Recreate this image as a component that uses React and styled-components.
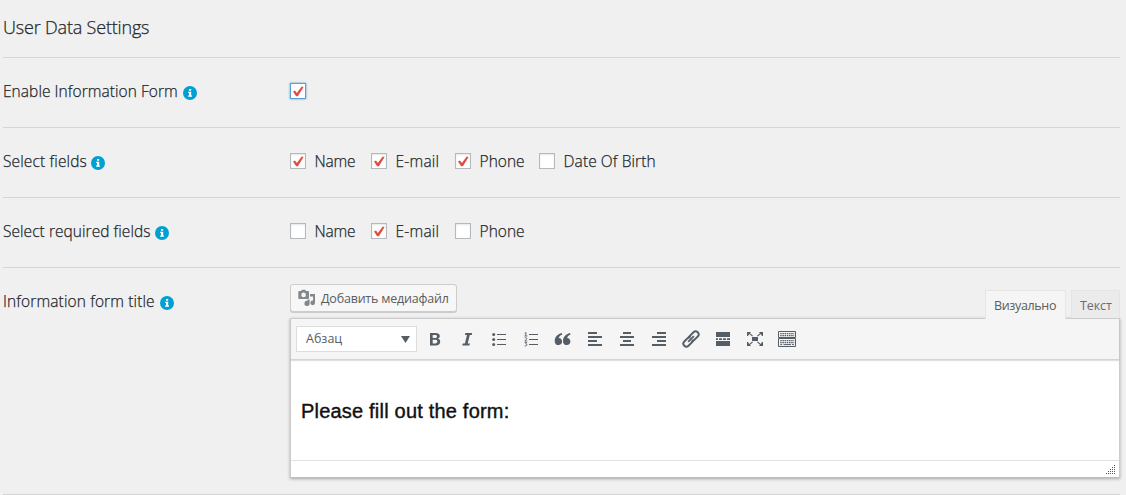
import React from 'react';
import styled, { createGlobalStyle, css } from 'styled-components';

const GlobalStyle = createGlobalStyle`
  * { box-sizing: border-box; }
  body {
    margin: 0;
    background: #f0f0f0;
    color: #23282d;
    font-family: "Open Sans", "Noto Sans", sans-serif;
    font-weight: 300;
    overflow: hidden;
  }
`;

const Page = styled.main`
  width: 1117px;
  margin-left: 3px;
`;

const Heading = styled.h2`
  margin: 0;
  height: 58px;
  padding-top: 15px;
  border-bottom: 1px solid #d5d5d5;
  font-size: 18px;
  font-weight: 300;
  line-height: 24px;
  letter-spacing: ${(p) => p.$spacing}px;
  white-space: nowrap;
  -webkit-text-stroke: 0.25px #23282d;
`;

const Row = styled.section`
  display: flex;
  height: ${(p) => p.$height || 70}px;
  border-bottom: 1px solid #d5d5d5;
`;

const Label = styled.div`
  display: flex;
  width: 287px;
  flex: none;
  padding-top: 21px;
  font-size: 15.5px;
  line-height: 24px;
  white-space: nowrap;
  -webkit-text-stroke: 0.25px #23282d;
`;

const LabelText = styled.span`
  width: ${(p) => p.$width}px;
  letter-spacing: ${(p) => p.$spacing}px;
`;

const InfoBadge = styled.svg`
  width: 14px;
  height: 14px;
  margin: 6.5px 0 0 -0.5px;
`;

const Options = styled.div`
  display: flex;
  padding-top: 21px;
`;

const Option = styled.label`
  display: flex;
  width: ${(p) => p.$width}px;
  font-size: 15.5px;
  line-height: 24px;
  white-space: nowrap;
  letter-spacing: ${(p) => p.$spacing || 0}px;
  -webkit-text-stroke: 0.25px #23282d;
`;

const Box = styled.span`
  display: block;
  width: 16px;
  height: 16px;
  margin: 4px 8.6px 0 0;
  flex: none;
  background: #fff;
  border: 1px solid #b4b9be;
  box-shadow: inset 0 1px 2px rgba(0, 0, 0, 0.1);
  svg { display: block; }
  ${(p) => p.$focused && css`
    border-color: #5b9dd9;
    box-shadow: 0 0 2px rgba(30, 140, 190, 0.8);
  `}
`;

const EditorWrap = styled.div`
  display: flex;
  flex-direction: column;
  width: 830px;
  padding-top: 16px;
`;

const Tools = styled.div`
  display: flex;
  justify-content: space-between;
  height: 34px;
`;

const MediaButton = styled.button`
  display: flex;
  align-items: center;
  width: 167px;
  height: 28px;
  padding: 0 0 0 7px;
  border: 1px solid #ccc;
  border-radius: 3px;
  background: #f7f7f7;
  box-shadow: 0 1px 0 #ccc;
  color: #5c5c5c;
  font: 12.5px "Open Sans", sans-serif;
  letter-spacing: ${(p) => p.$spacing}px;
  white-space: nowrap;
  svg { margin-right: 5px; flex: none; }
`;

const Tabs = styled.div`
  display: flex;
  gap: 5px;
  padding-top: 6px;
`;

const Tab = styled.div`
  position: relative;
  z-index: 1;
  width: ${(p) => p.$width}px;
  height: ${(p) => (p.$active ? 29 : 28)}px;
  padding-left: 8px;
  border: 1px solid #e5e5e5;
  border-bottom: 0;
  background: ${(p) => (p.$active ? '#f5f5f5' : '#ebebeb')};
  color: ${(p) => (p.$active ? '#5c5c5c' : '#6c6c6c')};
  font-size: 12.5px;
  font-weight: 400;
  line-height: 29px;
  letter-spacing: ${(p) => p.$spacing}px;
  white-space: nowrap;
`;

const Editor = styled.div`
  height: 160px;
  border: 1px solid #ccc;
  border-bottom-color: #bbb;
  background: #fff;
  box-shadow: 0 1px 3px rgba(0, 0, 0, 0.3);
`;

const Toolbar = styled.div`
  display: flex;
  align-items: center;
  height: 41px;
  padding-left: 5px;
  background: #f5f5f5;
  border-bottom: 1px solid #d4d4d4;
  box-shadow: 0 1px 1px rgba(0, 0, 0, 0.12);
`;

const FormatSelect = styled.div`
  display: flex;
  align-items: center;
  justify-content: space-between;
  width: 121px;
  height: 26px;
  margin-right: 8px;
  padding: 0 6px 1px 9px;
  border: 1px solid #ddd;
  background: #fff;
  color: #555d66;
  font-size: 12.5px;
  font-weight: 400;
  svg { margin-top: 2px; }
`;

const Tool = styled.svg`
  width: 20px;
  height: 20px;
  margin-right: 12px;
  flex: none;
  color: #555d66;
`;

const Content = styled.div`
  height: 101px;
  padding: 38px 0 0 10px;
  border-bottom: 1px solid #e2e2e2;
  color: #111;
  font-family: "Liberation Sans", Arial, sans-serif;
  font-size: 20px;
  font-weight: 400;
  line-height: 26px;
  -webkit-text-stroke: 0.4px #111;
  letter-spacing: ${(p) => p.$spacing}px;
  white-space: nowrap;
`;

const StatusBar = styled.div`
  display: flex;
  justify-content: flex-end;
  padding: 4px 3px 0 0;
`;

function Info() {
  return (
    <InfoBadge viewBox="0 0 14 14">
      <circle cx="7" cy="7" r="7" fill="#00a0d2" />
      <path d="M6 3h2.2v1.7H6zM5.2 5.8h3v3.7h.8v1.2H5.1V9.5H6V7h-.8z" fill="#fff" />
    </InfoBadge>
  );
}

function Field({ text, width, spacing }) {
  return (
    <Label>
      <LabelText $width={width} $spacing={spacing}>{text}</LabelText>
      <Info />
    </Label>
  );
}

function Check({ checked, focused, children, width, spacing }) {
  return (
    <Option $width={width} $spacing={spacing}>
      <Box $focused={focused}>
        {checked && (
          <svg width="14" height="14" viewBox="0 0 14 14">
            <path d="M2 7.6 4 6.6 5.9 9.1 10.7 2.6 12.6 3.1 6.9 12.2 5.1 12.2z" fill="#e14d43" />
          </svg>
        )}
      </Box>
      {children}
    </Option>
  );
}

const quote = 'M8.7 3.9C4.4 5 1.7 8 1.7 11.9c0 2.5 1.4 4.2 3.7 4.2s3.7-1.5 3.7-3.6-1.4-3.5-3.3-3.6c.3-1.5 1.3-2.7 3.5-3.5z';

const tools = {
  bold: <path fill="currentColor" fillRule="evenodd" d="M5 4h5.2c3 0 4.6 1.1 4.6 3.1 0 1.4-.8 2.3-2 2.7 1.6.3 2.4 1.4 2.4 2.9 0 2.3-1.7 3.8-4.7 3.8H5zm2.7 2v2.9h2.1c1.4 0 2.2-.5 2.2-1.5S11.3 6 9.8 6zm0 4.8v3.6h2.5c1.4 0 2.2-.6 2.2-1.8s-.8-1.8-2.3-1.8z" />,
  italic: <path fill="currentColor" d="M8.4 4h6.8l-.4 2h-2l-2.1 8.5h2.2l-.5 2H5.3l.5-2h2.1L10 6H8z" />,
  bullets: (
    <g fill="currentColor">
      <circle cx="4.7" cy="5.5" r="1.5" /><circle cx="4.7" cy="10.5" r="1.5" /><circle cx="4.7" cy="15.5" r="1.5" />
      <path d="M8 5h9v1H8zM8 10h9v1H8zM8 15h9v1H8z" />
    </g>
  ),
  numbers: (
    <g>
      <path fill="currentColor" d="M8 5h9v1H8zM8 10h9v1H8zM8 15h9v1H8z" />
      <path fill="none" stroke="currentColor" strokeWidth=".9" d="M3.7 4.2 4.9 3.5V7M3.5 7h2.8M3.7 9c1-.8 2.3-.3 2.1.7-.2.8-1.2 1.3-2 2.3h2.4M3.7 13.5h2l-1 1.3c2 .1 1.5 2.5-1.1 2.1" />
    </g>
  ),
  quote: <g fill="currentColor"><path d={quote} /><path transform="translate(8.3)" d={quote} /></g>,
  left: <path fill="currentColor" d="M3 3h9v2H3zM3 7h14v2H3zM3 11h9v2H3zM3 15h14v2H3z" />,
  center: <path fill="currentColor" d="M6 3h8v2H6zM3 7h14v2H3zM6 11h8v2H6zM3 15h14v2H3z" />,
  right: <path fill="currentColor" d="M8 3h9v2H8zM3 7h14v2H3zM8 11h9v2H8zM3 15h14v2H3z" />,
  link: (
    <g fill="none" stroke="currentColor" strokeWidth="1.9" transform="rotate(-45 10 10)">
      <path d="M11.4 8.2A3 3 0 0 0 9 7H3.5a3 3 0 0 0 0 6H9a3 3 0 0 0 2.4-1.2" />
      <path d="M8.6 11.8A3 3 0 0 0 11 13h5.5a3 3 0 0 0 0-6H11a3 3 0 0 0-2.4 1.2" />
      <path d="M6 10h8" />
    </g>
  ),
  more: <path fill="currentColor" d="M3 3h14v5H3zM3 9.3h2v1.6H3zM6 9.3h3v1.6H6zM10 9.3h3v1.6h-3zM14 9.3h3v1.6h-3zM3 12h14v5H3z" />,
  full: (
    <path fill="currentColor" d="M7 8h6v4H7zM2 3h4L5 4.2 8 6.8l-.8.8-3-2.6L3 7H2zM18 3h-4l1 1.2L12 6.8l.8.8 3-2.6L17 7h1zM2 17h4l-1-1.2 3-2.6-.8-.8-3 2.6L3 13H2zM18 17h-4l1-1.2-3-2.6.8-.8 3 2.6L17 13h1z" />
  ),
  keyboard: (
    <g fill="none" stroke="currentColor">
      <path d="M1.5 2.5h17v6h-17zM1.5 9.5h17v8h-17z" />
      <path strokeWidth="1.3" strokeDasharray="1.5 .7" d="M3.2 4.6h14M3.2 6.6h14M3.2 11.7h14M3.2 13.7h14" />
      <path d="M3.2 15.6h2M6.5 15.6h7.5M15 15.6h2" />
    </g>
  ),
};

function MediaIcon() {
  return (
    <svg width="18" height="18" viewBox="0 0 18 18" fill="#82878c">
      <path fillRule="evenodd" d="M3 2 4 .8h3L8.2 2H10q1 0 1 1v6q0 1-1 1H1.3q-1 0-1-1V3q0-1 1-1zM5.6 3.6a2.3 2.3 0 1 0 0 4.6 2.3 2.3 0 0 0 0-4.6z" />
      <path d="M12 5h5v8.8a2.3 2.3 0 1 1-1.9-2.2V7.6H12zM9.6 10.6h2v3.6a2.6 2.6 0 1 1-2-2.4z" />
    </svg>
  );
}

function Grip() {
  const dots = [];
  for (let r = 0; r < 5; r += 1) {
    for (let c = 4 - r; c < 5; c += 1) {
      dots.push(<rect key={`${r}-${c}`} x={c * 2} y={r * 2} width="1" height="1" />);
    }
  }
  return <svg width="10" height="10" viewBox="0 0 10 10" fill="#555">{dots}</svg>;
}

export default function App() {
  return (
    <>
      <GlobalStyle />
      <Page>
        <Heading $spacing={-0.18}>User Data Settings</Heading>
        <Row>
          <Field text="Enable Information Form" width={180} spacing={0.06} />
          <Options><Check checked focused /></Options>
        </Row>
        <Row>
          <Field text="Select fields" width={88} spacing={0.13} />
          <Options>
            <Check checked width={81} spacing={-0.2}>Name</Check>
            <Check checked width={84} spacing={0.2}>E-mail</Check>
            <Check checked width={84}>Phone</Check>
            <Check width={120} spacing={0.08}>Date Of Birth</Check>
          </Options>
        </Row>
        <Row>
          <Field text="Select required fields" width={152} spacing={0.05} />
          <Options>
            <Check width={81} spacing={-0.2}>Name</Check>
            <Check checked width={84} spacing={0.2}>E-mail</Check>
            <Check width={84}>Phone</Check>
          </Options>
        </Row>
        <Row $height={227}>
          <Field text="Information form title" width={157} spacing={0.12} />
          <EditorWrap>
            <Tools>
              <MediaButton type="button" $spacing={-0.2}><MediaIcon />Добавить медиафайл</MediaButton>
              <Tabs>
                <Tab $active $width={81} $spacing={-0.35}>Визуально</Tab>
                <Tab $width={49} $spacing={-0.1}>Текст</Tab>
              </Tabs>
            </Tools>
            <Editor>
              <Toolbar>
                <FormatSelect>
                  Абзац
                  <svg width="9" height="7" viewBox="0 0 9 7"><path d="M0 0h9L4.5 7z" fill="#555d66" /></svg>
                </FormatSelect>
                {Object.entries(tools).map(([name, art]) => (
                  <Tool key={name} viewBox="0 0 20 20">{art}</Tool>
                ))}
              </Toolbar>
              <Content $spacing={0.2}>Please fill out the form:</Content>
              <StatusBar><Grip /></StatusBar>
            </Editor>
          </EditorWrap>
        </Row>
      </Page>
    </>
  );
}
